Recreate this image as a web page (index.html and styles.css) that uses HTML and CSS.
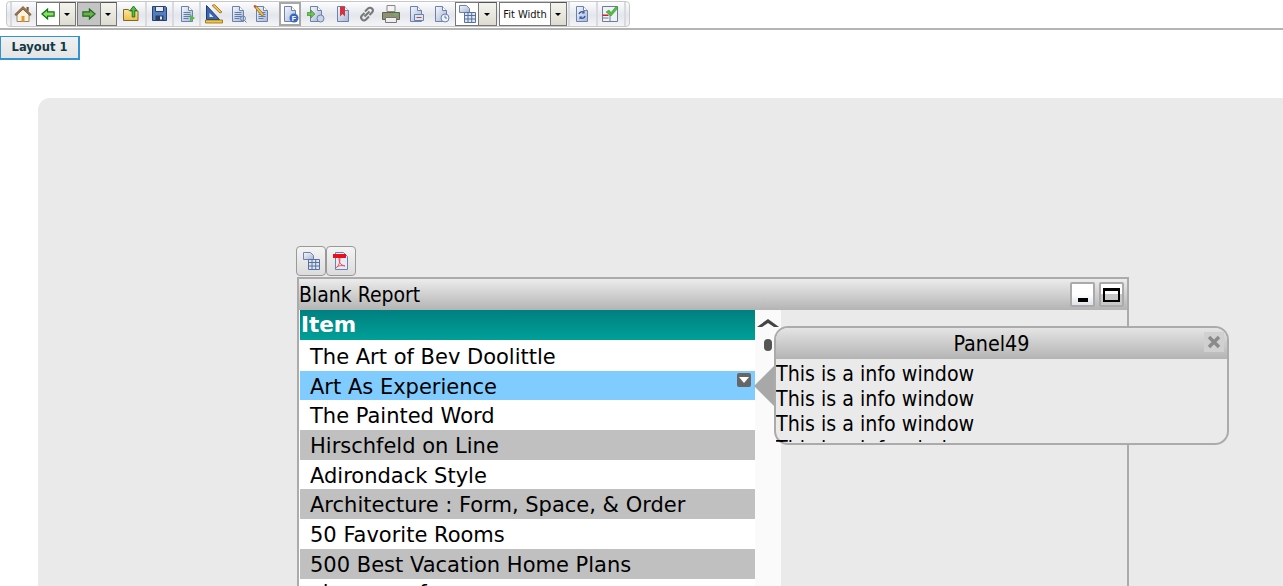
FILE: index.html
```html
<!DOCTYPE html>
<html lang="en">
<head>
<meta charset="utf-8">
<title>Blank Report</title>
<link rel="stylesheet" href="styles.css">
</head>
<body>
<svg class="defs" width="0" height="0" aria-hidden="true">
  <defs>
    <linearGradient id="pg" x1="0" y1="0" x2="1" y2="1"><stop offset="0" stop-color="#f7f8fc"/><stop offset="1" stop-color="#a6b6d2"/></linearGradient>
    <linearGradient id="gold" x1="0" y1="0" x2="0" y2="1"><stop offset="0" stop-color="#fbe79a"/><stop offset="1" stop-color="#eebf4a"/></linearGradient>
    <symbol id="doc" viewBox="0 0 18 18"><path d="M3.500 1.500h7l4 4v11h-11z" fill="url(#pg)" stroke="#6c82ac"/><path d="M10.500 1.500v4h4" fill="#fff" stroke="#6c82ac"/></symbol>
    <symbol id="lines" viewBox="0 0 18 18"><path d="M5.500 7.500h7M5.500 9.500h7M5.500 11.500h7M5.500 13.500h5" stroke="#5f7cab" fill="none"/></symbol>
    <symbol id="dd" viewBox="0 0 16 24"><path d="M5 11h6l-3 3z" fill="#000"/></symbol>
    <symbol id="grid" viewBox="0 0 20 20"><path d="M2.500 1.500h7l3 3v4h-10z" fill="url(#pg)" stroke="#6c82ac"/><path d="M7.500 8.500h11v10h-11z" fill="#dfe6f3" stroke="#56709f"/><path d="M7.500 11.500h11M7.500 15h11M11 8.500v10M14.700 8.500v10" stroke="#56709f" fill="none"/></symbol>
  </defs>
</svg>

<nav class="toolbar-row">
  <div class="toolbar">
    <span class="sep first"></span>
    <span class="ti home"><svg viewBox="0 0 18 18" width="18" height="18"><path d="M9 3 3 9v7.500h12V9z" fill="#fbf3dc" stroke="#9a8660"/><path d="M9 1.500 .8 9.500l1.400 1L9 4.200l6.800 6.300 1.400-1z" fill="#a8764a" stroke="#5c4126" stroke-width=".7"/><path d="M7.500 11h3v5.500h-3z" fill="#e89a2c"/><path d="M12.500 2h2.200v4.500l-2.200-2z" fill="#7a5a3c"/></svg></span>
    <span class="box nav"><svg viewBox="0 0 16 16" width="14" height="14"><path d="M1 8 7.500 2.500v3H15v5H7.500v3z" fill="#8fdc68" stroke="#0b7a12" stroke-width="1.400"/></svg></span>
    <span class="drop"><svg width="16" height="24"><use href="#dd"/></svg></span>
    <span class="box nav pressed"><svg viewBox="0 0 16 16" width="14" height="14"><path d="M15 8 8.500 2.500v3H1v5h7.500v3z" fill="#6fae4a" stroke="#1d6d1d" stroke-width="1.400"/></svg></span>
    <span class="drop"><svg width="16" height="24"><use href="#dd"/></svg></span>
    <span class="ti folder"><svg viewBox="0 0 18 18" width="18" height="18"><path d="M1.500 4.500h5l1 1.500h8.500v9.500H1.500z" fill="url(#gold)" stroke="#7d6a2a"/><path d="M11.500 1 8 5.500h2.200v6.500h2.600V5.500H15z" fill="#4fc040" stroke="#1f6d1f" stroke-width=".9"/></svg></span>
    <span class="sep"></span>
    <span class="ti w25"><svg viewBox="0 0 18 18" width="18" height="18"><path d="M1.500 1.500h13l1 1v13h-14z" fill="#4f7fc0" stroke="#2c3f66"/><path d="M4.500 1.500h8v5h-8z" fill="#e6edf7" stroke="#2c3f66"/><path d="M4.500 10.500h8v5h-8z" fill="#2b3d60"/><path d="M9 11.500h2v3H9z" fill="#dfe8f5"/></svg></span>
    <span class="sep"></span>
    <span class="ti w25"><svg width="18" height="18"><use href="#doc"/><use href="#lines"/><path d="M12 9.500 17 13l-5 3.500z" fill="#59b84a"/></svg></span>
    <span class="sep"></span>
    <span class="ti w25"><svg viewBox="0 0 20 20" width="20" height="20"><path d="M2.500 1.500v14h13z" fill="#3a66b0" stroke="#1e3a78"/><path d="M5.500 9v4h4z" fill="#dfe8f5"/><path d="M8 1.500 16 9l2-1-7.500-7.500z" fill="#f0c040" stroke="#8a5a14" stroke-width=".7"/><path d="M1.500 16h17v3h-17z" fill="#f4c838" stroke="#7a5a10" stroke-width=".7"/></svg></span>
    <span class="ti"><svg width="18" height="18"><use href="#doc"/><use href="#lines"/><circle cx="14" cy="13.500" r="2.500" fill="none" stroke="#6c82ac"/><path d="m15.500 15.500 2 2" stroke="#6c82ac"/></svg></span>
    <span class="ti"><svg width="18" height="18"><use href="#doc"/><use href="#lines"/><path d="M1 1.500 3 .5l8 9-2 1.500z" fill="#f0c040" stroke="#8a5a14" stroke-width=".7"/><path d="M1 .5 3 2.500" stroke="#d04a3a" stroke-width="1.500"/></svg></span>
    <span class="box flagged"><svg width="18" height="18"><use href="#doc"/><circle cx="13" cy="13" r="4.500" fill="#3a66c0"/><text x="13" y="15.500" class="ftext">F</text></svg></span>
    <span class="ti wide"><svg width="18" height="18"><use href="#doc"/><path d="M0 7.500h4V5l4 4-4 4v-2.500H0z" fill="#6cc050" stroke="#3a8a2a" stroke-width=".6"/><circle cx="13.500" cy="13.500" r="3.500" fill="#c9d3e4" stroke="#6c82ac"/></svg></span>
    <span class="ti wide"><svg width="18" height="18"><use href="#doc"/><path d="M6 1.500h5v10l-2.500-2.500L6 11.500z" fill="#d43040"/></svg></span>
    <span class="ti"><svg viewBox="0 0 18 18" width="18" height="18"><path d="M6.500 11.500 11.500 6.500" stroke="#777" stroke-width="2"/><path d="M7 6.500 10 3.500a2.800 2.800 0 0 1 4 4L11.500 10M11 11.500 8 14.500a2.800 2.800 0 0 1-4-4L6.500 8" fill="none" stroke="#777" stroke-width="2"/></svg></span>
    <span class="ti"><svg viewBox="0 0 20 20" width="20" height="20"><path d="M6 1.500h8v6H6z" fill="#f4f4f4" stroke="#888"/><path d="M1.500 8.500h17v7h-17z" fill="#8d9270" stroke="#5e6250"/><path d="M4.500 13.500h11v5h-11z" fill="#eee" stroke="#777"/><path d="M13 9.500h3v2h-3z" fill="#5cc05c"/></svg></span>
    <span class="ti narrow"><svg width="18" height="18"><use href="#doc"/><path d="M7.500 9.500h9v6h-9z" fill="#dbe4f2" stroke="#6c82ac"/><path d="M9.500 12.500h5" stroke="#c04a3a"/></svg></span>
    <span class="ti w26"><svg width="18" height="18"><use href="#doc"/><circle cx="13" cy="13" r="4" fill="#eef2f9" stroke="#6c82ac"/><path d="M13 10.500V13h2" fill="none" stroke="#5f7cab"/></svg></span>
    <span class="box tbl"><svg width="20" height="20"><use href="#grid"/></svg></span>
    <span class="drop wider"><svg width="16" height="24"><use href="#dd"/></svg></span>
    <span class="box fit">Fit Width</span>
    <span class="drop"><svg width="16" height="24"><use href="#dd"/></svg></span>
    <span class="sep after-drop"></span>
    <span class="ti"><svg width="18" height="18"><use href="#doc"/><path d="M6 9a3 3 0 0 1 5-1.500M12 11a3 3 0 0 1-5 1.500" fill="none" stroke="#2f56a8" stroke-width="1.300"/><path d="M11.500 5.500v3h-3zM6.500 14.500v-3h3z" fill="#2f56a8"/></svg></span>
    <span class="sep spaced"></span>
    <span class="ti"><svg viewBox="0 0 18 18" width="18" height="18"><path d="M1.500 1.500h15v15h-15z" fill="#eef1f6" stroke="#6f7d94"/><path d="M1.500 9.500h6v1.500h-6z" fill="#c8202c"/><path d="M1.500 13h6M9 9v7.500" stroke="#6f7d94"/><path d="M5 7 8 5l2 2.500L15.500 1 17 3l-7 8z" fill="#55c040" stroke="#2a8a20" stroke-width=".5"/></svg></span>
    <span class="sep spaced"></span>
  </div>
</nav>

<div class="tabs"><button class="tab" type="button">Layout 1</button></div>

<main class="canvas">
  <div class="actions">
    <button class="act" type="button" aria-label="Export table"><svg width="20" height="20"><use href="#grid"/></svg></button>
    <button class="act" type="button" aria-label="Export PDF"><svg viewBox="0 0 20 20" width="20" height="20"><path d="M4.500 1.500h8l4 4v13h-12z" fill="#e6ebf5" stroke="#6c82ac"/><path d="M2 3h13v4H2z" fill="#e8101c"/><path d="M8 7c0 4 1 7 6 8-4-1-8 0-9 2 3-2 4-6 4-10" fill="none" stroke="#e8505a"/></svg></button>
  </div>

  <section class="window">
    <header class="win-head">
      <span class="win-title">Blank Report</span>
      <span class="win-btns">
        <span class="win-btn min"><span class="min-mark"></span></span>
        <span class="win-btn max"><span class="max-mark"></span></span>
      </span>
    </header>
    <div class="win-body">
      <div class="list">
        <div class="list-head">Item</div>
        <div class="row">The Art of Bev Doolittle</div>
        <div class="row sel">Art As Experience<span class="row-menu"><svg viewBox="0 0 10 6" width="10" height="6"><path d="M0 0h10L5 6z" fill="#fff"/></svg></span></div>
        <div class="row">The Painted Word</div>
        <div class="row alt">Hirschfeld on Line</div>
        <div class="row">Adirondack Style</div>
        <div class="row alt">Architecture : Form, Space, &amp; Order</div>
        <div class="row">50 Favorite Rooms</div>
        <div class="row alt">500 Best Vacation Home Plans</div>
        <div class="row clipped">almanac of</div>
      </div>
      <div class="scroll">
        <svg class="scroll-up" viewBox="0 0 22 10" width="22" height="10"><path d="M0 9 11 1l11 8h-5l-6-4-6 4z" fill="#444"/></svg>
        <span class="scroll-thumb"></span>
      </div>
    </div>
  </section>

  <aside class="info">
    <span class="info-arrow"></span>
    <header class="info-head">
      <span class="info-title">Panel49</span>
      <span class="info-close"><svg viewBox="0 0 14 14" width="14" height="14"><path d="M2 2l10 10M12 2 2 12" stroke="#8a8a8a" stroke-width="3.400"/></svg></span>
    </header>
    <div class="info-body">
      <p>This is a info window</p>
      <p>This is a info window</p>
      <p>This is a info window</p>
      <p>This is a info window</p>
    </div>
  </aside>
</main>
</body>
</html>
```
FILE: styles.css
```css
* { box-sizing: border-box; }
html, body { margin: 0; padding: 0; height: 586px; overflow: hidden; background: #fff; }
body { font-family: "DejaVu Sans", sans-serif; color: #000; }
.defs { position: absolute; }

.toolbar-row { height: 30px; padding: 1px 0 0 6px; border-bottom: 2px solid #b4b4b4; }
.toolbar { display: inline-flex; align-items: center; height: 26px; width: 624px; padding-left: 3px; border: 1px solid #c8c8c8; border-radius: 4px; background: linear-gradient(#fdfdfe, #e3e6ec 55%, #f5f5f7); }
.sep { width: 2px; height: 24px; flex: none; background: #d8dadd; }
.sep.first { margin-right: 1px; }
.sep.after-drop { margin-left: 1px; }
.sep.spaced { margin-left: 2px; }
.ti { width: 24px; height: 24px; display: flex; align-items: center; justify-content: center; flex: none; }
.ti.home { width: 23px; padding-right: 4px; }
.ti.folder { width: 28px; }
.ti.w25 { width: 25px; }
.ti.wide { margin-left: 3px; }
.ti.narrow { margin-left: 1px; }
.ti.w26 { width: 26px; }
.box { height: 24px; display: flex; align-items: center; justify-content: center; flex: none; background: #fff; border: 1px solid #777; }
.nav { width: 24px; }
.nav.pressed { background: #c4c4c4; margin-left: 1px; }
.drop { width: 16px; height: 24px; flex: none; background: linear-gradient(#f4f4ee, #dedcd0); border: 1px solid #777; border-left: 0; border-top-color: #555; display: flex; }
.drop.wider { width: 18px; padding-left: 1px; }
.drop svg { margin: -1px 0 0 -1px; }
.flagged { width: 22px; margin-left: 5px; border: 2px solid #a8a8a8; }
.ftext { font: bold 7px "Liberation Sans", sans-serif; fill: #fff; text-anchor: middle; }
.tbl { width: 24px; margin-left: 1px; }
.fit { width: 52px; margin-left: 2px; font: 11px "DejaVu Sans Condensed", "DejaVu Sans", sans-serif; color: #111; white-space: nowrap; }

.tabs { height: 68px; padding-top: 6px; }
.tab { display: block; width: 80px; height: 24px; padding: 0 0 2px; border: 1px solid #3292d2; border-width: 1px 2px 2px 1px; background: linear-gradient(#f1f1f1, #e4e4e4); color: #0f3a48; font: bold 11.500px "DejaVu Sans", sans-serif; }

.canvas { position: relative; height: 488px; margin-left: 38px; padding: 148px 0 0 258px; background: #eaeaea; border-radius: 12px 0 0 0; }
.actions { display: flex; height: 31px; }
.act { width: 30px; height: 30px; padding: 0; display: flex; align-items: center; justify-content: center; border: 1px solid #999; border-radius: 4px; background: linear-gradient(#f4f4f4, #dcdcdc); }

.window { width: 832px; height: 320px; margin-left: 1px; border: 2px solid #ababab; border-bottom: 0; }
.win-head { height: 31px; display: flex; align-items: center; justify-content: space-between; background: linear-gradient(#ececec, #b4b4b4); }
.win-title { font: 21px "DejaVu Sans Condensed", "DejaVu Sans", sans-serif; }
.win-btns { display: flex; gap: 4px; padding-right: 3px; }
.win-btn { width: 25px; height: 25px; display: flex; justify-content: center; border: 2px solid #aaa; border-radius: 2px; background: #fff; }
.min { background: linear-gradient(#fff 50%, #dfe3e8); align-items: flex-end; padding-bottom: 3px; }
.min-mark { width: 10px; height: 4px; background: #000; }
.max { background: linear-gradient(#fff 50%, #c8c8c8 50%); align-items: center; }
.max-mark { width: 17px; height: 14px; border: 2px solid #000; border-top-width: 3px; }
.win-body { display: flex; height: 289px; padding-left: 1px; background: linear-gradient(90deg, #fff 1px, transparent 1px); }
.list { width: 455px; flex: none; }
.list-head { height: 31px; padding: 0 1px; border-bottom: 1px solid #fff; background: linear-gradient(#008080, #00a098); color: #fff; font: bold 21.500px/30px "DejaVu Sans", sans-serif; }
.row { position: relative; height: 29.700px; padding-left: 10px; font-size: 21px; line-height: 32px; white-space: nowrap; background: #fff; }
.row.sel { background: #80ccff; }
.row.alt { background: #c0c0c0; }
.row.clipped { line-height: 29px; }
.row-menu { position: absolute; top: 2px; right: 4px; width: 14px; height: 14px; display: flex; align-items: center; justify-content: center; background: #666; border-radius: 2px; }
.scroll { position: relative; width: 26px; flex: none; background: #fafafa; }
.scroll-up { position: absolute; top: 8px; left: 2px; }
.scroll-thumb { position: absolute; top: 29px; left: 9px; width: 8px; height: 12px; border-radius: 4px; background: #555; }

.info { position: absolute; left: 736px; top: 228px; width: 455px; height: 119px; border: 2px solid #ababab; border-radius: 14px; background: #eaeaea; }
.info-arrow { position: absolute; left: -22px; top: 38px; border: 20px solid transparent; border-left: 0; border-right: 20px solid #a8a8a8; }
.info-head { position: relative; height: 31px; display: flex; align-items: center; justify-content: center; padding-right: 20px; border-radius: 12px 12px 0 0; background: linear-gradient(#e4e4e4, #b4b4b4); }
.info-title { font: 21.300px "DejaVu Sans Condensed", "DejaVu Sans", sans-serif; }
.info-close { position: absolute; right: 3px; top: 4px; width: 20px; height: 20px; display: flex; align-items: center; justify-content: center; background: #d0d0d0; }
.info-body { height: 83px; padding-top: 2px; overflow: hidden; }
.info-body p { margin: 0; font: 21.200px/25px "DejaVu Sans Condensed", "DejaVu Sans", sans-serif; white-space: nowrap; }
```
